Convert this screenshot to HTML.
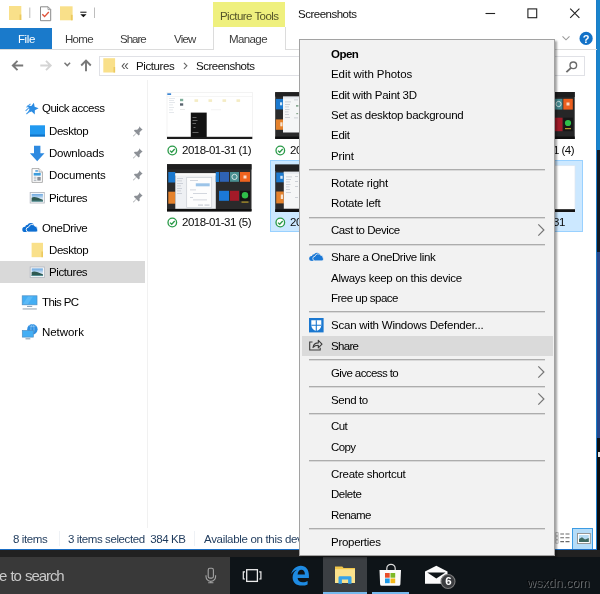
<!DOCTYPE html>
<html><head><meta charset="utf-8"><title>Screenshots</title>
<style>
*{box-sizing:border-box;margin:0;padding:0}
html,body{width:600px;height:594px;overflow:hidden;background:#fff}
body{position:relative;font-family:"Liberation Sans",sans-serif;font-size:11.5px;color:#1a1a1a}
.a{position:absolute}
div{will-change:transform}
svg{position:absolute;overflow:visible}
.t{position:absolute;white-space:nowrap;line-height:14px;height:14px;letter-spacing:-.4px}
.sep{position:absolute;left:309px;width:236px;height:1px;background:#adadad;box-shadow:0 1px 0 rgba(160,160,160,.3)}
.mi{position:absolute;left:331px;white-space:nowrap;line-height:14px;height:14px;color:#000;letter-spacing:-.28px}
.nav{position:absolute;white-space:nowrap;line-height:14px;height:14px;color:#000;letter-spacing:-.42px}
.lbl{position:absolute;white-space:nowrap;line-height:14px;height:14px;color:#0a0a0a;letter-spacing:-.5px}
</style></head><body>
<!-- window background -->
<div class="a" id="win" style="left:0;top:0;width:596px;height:549px;background:#fff"></div>
<!-- right desktop strip -->
<div class="a" style="left:596px;top:0;width:4px;height:150px;background:#1a84cc"></div>
<div class="a" style="left:596px;top:150px;width:4px;height:102px;background:#121a24"></div>
<div class="a" style="left:596px;top:252px;width:4px;height:186px;background:#27478a"></div>
<div class="a" style="left:596px;top:438px;width:4px;height:112px;background:#0c0d10"></div>
<div class="a" style="left:598px;top:452px;width:2px;height:5px;background:#e8e8e8"></div>
<div class="a" style="left:596px;top:0;width:1px;height:550px;background:#1c7cc8"></div>

<!-- ===== title bar ===== -->
<svg style="left:0;top:0" width="100" height="28" viewBox="0 0 100 28">
  <rect x="9" y="6" width="12.3" height="14" fill="#f9e08a"/><rect x="19.6" y="14.5" width="1.7" height="5.5" fill="#ecc95e"/>
  <rect x="29.3" y="7.5" width="1" height="10.5" fill="#bdbdbd"/>
  <path d="M40.5 6.8h7.6l2.6 2.6v11.3h-10.2z" fill="#fff" stroke="#8a8a8a" stroke-width="1"/>
  <path d="M48 6.8v2.8h2.7" fill="none" stroke="#8a8a8a" stroke-width=".8"/>
  <path d="M42.3 14.2l2.3 2.4l4.2-4.6" fill="none" stroke="#e0533a" stroke-width="1.4"/>
  <rect x="60" y="6.3" width="12.6" height="14" fill="#f9e08a"/><rect x="70.9" y="14.8" width="1.7" height="5.5" fill="#ecc95e"/>
  <rect x="80.3" y="11.7" width="6.2" height="1" fill="#111"/>
  <path d="M80.3 14.2h6.2l-3.1 3.1z" fill="#111"/>
  <rect x="94" y="7.5" width="1" height="10.5" fill="#bdbdbd"/>
</svg>
<div class="a" style="left:213px;top:2px;width:72px;height:25px;background:#eff07e"></div>
<div class="t" style="left:220px;top:9px;color:#55552a;letter-spacing:-.55px">Picture Tools</div>
<div class="t" style="left:298px;top:7px;color:#111;letter-spacing:-.5px">Screenshots</div>
<svg style="left:480px;top:0" width="117" height="28" viewBox="480 0 117 28">
  <path d="M485.5 13.5h9.6" stroke="#222" stroke-width="1.1"/>
  <rect x="527.9" y="8.9" width="8.8" height="8.8" fill="none" stroke="#222" stroke-width="1.1"/>
  <path d="M570.2 8.6l9.2 9.2M579.4 8.6l-9.2 9.2" stroke="#222" stroke-width="1.1"/>
</svg>

<!-- ===== ribbon tabs ===== -->
<div class="a" style="left:0;top:28px;width:52px;height:22px;background:#1a7acb"></div>
<div class="t" style="left:17.500px;top:32px;color:#fff">File</div>
<div class="t" style="left:65px;top:32px;color:#3c3c3c;letter-spacing:-.7px">Home</div>
<div class="t" style="left:120px;top:32px;color:#3c3c3c;letter-spacing:-1px">Share</div>
<div class="t" style="left:174px;top:32px;color:#3c3c3c;letter-spacing:-.8px">View</div>
<div class="a" style="left:0;top:49px;width:597px;height:1px;background:#dcdcdc"></div>
<div class="a" style="left:213px;top:27px;width:73px;height:23px;border:1px solid #dcdcdc;border-top:none;border-bottom:none;background:#fff"></div>
<div class="t" style="left:229px;top:32px;color:#3c3c3c;letter-spacing:-.6px">Manage</div>
<svg style="left:556px;top:28px" width="40" height="22" viewBox="556 28 40 22">
  <path d="M562.5 36.3l3.5 3.5l3.5-3.5" fill="none" stroke="#9a9a9a" stroke-width="1.1"/>
  <circle cx="586.100" cy="38.400" r="6.600" fill="#1272c8"/>
</svg>
<div class="a" style="left:582px;top:31.500px;width:8px;height:14px;line-height:14px;text-align:center;color:#fff;font-weight:bold;font-size:11px">?</div>

<!-- ===== address bar ===== -->
<svg style="left:0;top:52px" width="100" height="28" viewBox="0 52 100 28">
  <path d="M23.200 65.500h-10M17.500 60.800l-4.700 4.700l4.700 4.700" fill="none" stroke="#787878" stroke-width="1.900"/>
  <path d="M40.300 65.500h10M46 60.800l4.700 4.700l-4.700 4.700" fill="none" stroke="#d4d4d4" stroke-width="1.900"/>
  <path d="M64.500 62.800l2.800 2.800l2.800-2.800" fill="none" stroke="#787878" stroke-width="1.500"/>
  <path d="M86 71.200v-10.400M81.200 65.500l4.800-4.800l4.800 4.800" fill="none" stroke="#787878" stroke-width="1.900"/>
</svg>
<div class="a" style="left:99px;top:56px;width:420px;height:20px;border:1px solid #e0e1e6;background:#fff"></div>
<svg style="left:100px;top:56px" width="20" height="20" viewBox="100 56 20 20">
  <rect x="103.3" y="58.2" width="11.8" height="14.3" fill="#f9e08a"/><rect x="113.5" y="67" width="1.6" height="5.5" fill="#ecc95e"/>
</svg>
<div class="t" style="left:120.500px;top:58px;color:#555;font-size:14px;letter-spacing:-1.500px">«</div>
<div class="t" style="left:136px;top:59px;color:#111">Pictures</div>
<svg style="left:180px;top:58px" width="10" height="16" viewBox="180 58 10 16"><path d="M183.9 62.8l3 3l-3 3" fill="none" stroke="#666" stroke-width="1.1"/></svg>
<div class="t" style="left:196px;top:59px;color:#111;letter-spacing:-.5px">Screenshots</div>
<div class="a" style="left:530px;top:56px;width:55px;height:20px;border:1px solid #e0e1e6;background:#fff"></div>
<svg style="left:560px;top:58px" width="22" height="18" viewBox="560 58 22 18">
  <circle cx="573.3" cy="65.3" r="3.3" fill="none" stroke="#6b6b6b" stroke-width="1.4"/>
  <path d="M571 67.8l-4.6 4.4" stroke="#6b6b6b" stroke-width="1.8"/>
</svg>

<!-- ===== nav pane ===== -->
<div class="a" style="left:147px;top:80px;width:1px;height:448px;background:#f1f1f1"></div>
<div class="a" style="left:0;top:261px;width:145px;height:22px;background:#d9d9d9"></div>
<div class="nav" style="left:42px;top:101px;letter-spacing:-0.5px">Quick access</div>
<div class="nav" style="left:49px;top:124px">Desktop</div>
<div class="nav" style="left:49px;top:146px;letter-spacing:-0.22px">Downloads</div>
<div class="nav" style="left:49px;top:168px;letter-spacing:-0.17px">Documents</div>
<div class="nav" style="left:49px;top:190.500px">Pictures</div>
<div class="nav" style="left:42px;top:220.500px">OneDrive</div>
<div class="nav" style="left:49px;top:242.500px">Desktop</div>
<div class="nav" style="left:49px;top:265px">Pictures</div>
<div class="nav" style="left:42px;top:294.700px;letter-spacing:-0.62px">This PC</div>
<div class="nav" style="left:42px;top:324.500px;letter-spacing:-0.05px">Network</div>
<svg style="left:0;top:95px" width="150" height="250" viewBox="0 95 150 250">
  <!-- quick access star -->
  <path d="M33.90 102.68L34.62 106.84L38.58 108.27L34.86 110.24L34.72 114.45L31.70 111.51L27.65 112.69L29.51 108.90L27.14 105.41L31.31 106.01z" fill="#2a8be2"/>
  <path d="M30.500 103.800l-4 3.600M28.800 107.800l-3.200 3M29.800 111l-3.400 3" stroke="#4a9fea" stroke-width="1.100"/>
  <!-- desktop -->
  <rect x="30" y="125.300" width="15" height="11.200" fill="#2199f0"/><rect x="30" y="134.500" width="15" height="2" fill="#1274c8"/>
  <!-- downloads arrow -->
  <path d="M34 145.800h6.400v7.400h4.100l-7.300 8l-7.300-8h4.100z" fill="#2e8ae0"/>
  <!-- documents -->
  <path d="M32 168.600h7l3.400 3.400v10.400h-10.400z" fill="#fff" stroke="#9c9c9c" stroke-width=".8"/>
  <path d="M39 168.600v3.400h3.400" fill="#f0f0f0" stroke="#9c9c9c" stroke-width=".7"/>
  <rect x="35.300" y="170.200" width="2.600" height="1.500" fill="#4a9ad8"/><rect x="33.700" y="172.900" width="7" height="2.700" fill="#3d9ddc"/>
  <path d="M33.700 177.200h2.800M33.700 178.900h2.800M33.700 180.600h2.800" stroke="#9aa4ae" stroke-width=".8"/><rect x="37.300" y="176.900" width="3.400" height="3.700" fill="#8a9098"/>
  <!-- pictures -->
  <defs><linearGradient id="sky" x1="0" y1="0" x2="0" y2="1"><stop offset="0" stop-color="#6aa6de"/><stop offset=".7" stop-color="#e3eef8"/></linearGradient></defs>
  <rect x="30.200" y="192.5" width="14.100" height="10.500" fill="#fff" stroke="#b4b9c1" stroke-width=".9"/>
  <rect x="31.600" y="193.9" width="11.300" height="7.700" fill="url(#sky)"/><path d="M31.600 197.8c3-1.800 6 .3 11.300 1.900v1.900h-11.300z" fill="#2f5a52"/><rect x="31.600" y="200.7" width="11.300" height=".9" fill="#5a98a0"/>
  <!-- pins -->
  <g fill="#8c9096"><path d="M139 126.2l3.6 3.6l-1 .4l-2 2l.1 2.4l-1 .9l-2.3-2.3l-2.9 3.2l-.5-.5l3.2-2.9l-2.3-2.3l.9-1l2.4.1l2-2z"/></g>
  <g fill="#8c9096" transform="translate(0 22)"><path d="M139 126.2l3.6 3.6l-1 .4l-2 2l.1 2.4l-1 .9l-2.3-2.3l-2.9 3.2l-.5-.5l3.2-2.9l-2.3-2.3l.9-1l2.4.1l2-2z"/></g><g fill="#8c9096" transform="translate(0 44)"><path d="M139 126.2l3.6 3.6l-1 .4l-2 2l.1 2.4l-1 .9l-2.3-2.3l-2.9 3.2l-.5-.5l3.2-2.9l-2.3-2.3l.9-1l2.4.1l2-2z"/></g><g fill="#8c9096" transform="translate(0 66)"><path d="M139 126.2l3.6 3.6l-1 .4l-2 2l.1 2.4l-1 .9l-2.3-2.3l-2.9 3.2l-.5-.5l3.2-2.9l-2.3-2.3l.9-1l2.4.1l2-2z"/></g>
  <!-- onedrive -->
  <g fill="#0f6fd2"><circle cx="25" cy="229.400" r="2.700"/><circle cx="27.700" cy="227.300" r="2.500"/><circle cx="30.800" cy="226.300" r="3.200"/><rect x="25" y="228" width="8" height="4.100"/></g>
  <path d="M28.800 232.100a2.500 2.500 0 0 1-.2-5a3.500 3.500 0 0 1 6.300-1.100a2.700 2.700 0 0 1 2.500 2.900a2.100 2.100 0 0 1-1 3.200z" fill="#0f6fd2" stroke="#fff" stroke-width=".9"/>
  <rect x="22" y="232.100" width="16" height="1.500" fill="#fff"/>
  <!-- folder -->
  <rect x="31.6" y="242.8" width="11.4" height="14.4" fill="#f9e08a"/><rect x="41.400" y="251.500" width="1.600" height="5.700" fill="#ecc95e"/>
  <!-- pictures selected -->
  <rect x="30.200" y="267.0" width="14.100" height="10.500" fill="#fff" stroke="#b4b9c1" stroke-width=".9"/>
  <rect x="31.600" y="268.4" width="11.300" height="7.700" fill="url(#sky)"/><path d="M31.600 272.3c3-1.800 6 .3 11.300 1.900v1.900h-11.300z" fill="#2f5a52"/><rect x="31.600" y="275.2" width="11.300" height=".9" fill="#5a98a0"/>
  <!-- this pc -->
  <rect x="22.200" y="295.800" width="14.800" height="9" fill="#43aef4" stroke="#4f8fc4" stroke-width=".7"/>
  <path d="M23 304l5-7.500h5l-5 7.500z" fill="#6cc2f8" opacity=".6"/>
  <rect x="27" y="305.900" width="5.200" height="1" fill="#7f9db4"/><rect x="22.600" y="308.300" width="14.200" height="1.300" fill="#a9b6c0"/>
  <!-- network -->
  <circle cx="32.400" cy="329.300" r="5.200" fill="#2f8fe2"/><path d="M29 325.500c2 1.500 5 1.500 7 0M32.400 324.100c-2 2.500-2 7 0 10M32.400 324.100c2.200 2.500 2.200 7 0 10" fill="none" stroke="#8cc6f4" stroke-width=".8"/>
  <rect x="22.300" y="330.500" width="11" height="6.600" fill="#43aef4" stroke="#4f8fc4" stroke-width=".7"/>
  <rect x="25.500" y="338.200" width="4.800" height="1.200" fill="#8ea4b4"/>
</svg>

<!-- ===== content ===== -->
<div class="a" style="left:270px;top:160px;width:313px;height:72px;background:#cce8ff;border:1px solid #99d1ff"></div>
<!-- thumbnails -->
<svg style="left:160px;top:88px" width="436" height="130" viewBox="160 88 436 130">
  <!-- thumb 1 -->
  <rect x="167" y="92.300" width="85.300" height="46.700" fill="#fff" stroke="#ececec" stroke-width=".6"/>
  <rect x="167.300" y="93.300" width="3.800" height="1.700" fill="#3c86d4"/>
  <rect x="167.300" y="96" width="84.700" height=".6" fill="#efefef"/>
  <g fill="#dfe3e8"><rect x="169" y="98" width="6" height=".8"/><rect x="169" y="100" width="5" height=".8"/><rect x="169" y="102" width="6" height=".8"/><rect x="169" y="104.500" width="4" height=".8"/><rect x="169" y="107" width="5" height=".8"/><rect x="169" y="109.500" width="4" height=".8"/><rect x="169" y="112" width="5" height=".8"/></g>
  <rect x="180" y="98.800" width="3.200" height="2.400" fill="#7fae9a"/><rect x="180" y="103.300" width="3.200" height="2.400" fill="#5a6470"/>
  <rect x="180" y="109" width="5" height=".8" fill="#e3e3e3"/>
  <g fill="#f4ecc4"><rect x="194.500" y="99.300" width="3.600" height="2.600"/><rect x="208.500" y="99.300" width="3.600" height="2.600"/><rect x="222.500" y="99.300" width="3.600" height="2.600"/><rect x="236.500" y="99.300" width="3.600" height="2.600"/></g>
  <rect x="211" y="109.500" width="10" height=".7" fill="#ededed"/>
  <rect x="190.800" y="112.600" width="15.900" height="24.600" fill="#121212"/>
  <g fill="#8a8a8a"><rect x="192.500" y="117" width="4" height=".7"/><rect x="192.500" y="120" width="5" height=".7"/><rect x="192.500" y="123" width="3.500" height=".7"/><rect x="193.500" y="127" width="2" height=".7"/><rect x="192.500" y="132" width="6" height=".7"/></g>
  <rect x="167" y="136.800" width="85.300" height="2.200" fill="#1c1c1c"/>
  <!-- thumb 2 -->
  <rect x="275.200" y="92.200" width="85" height="46.700" fill="#2b2b2c"/>
  <rect x="275.200" y="92.200" width="85" height="4.400" fill="#212122"/>
  <rect x="275.800" y="98.900" width="7.200" height="10.500" fill="#1b79cf"/><rect x="280" y="102.300" width="2.200" height="3" fill="#d5e6f6"/>
  <rect x="275.800" y="119.400" width="7.200" height="10.400" fill="#e5822c"/><rect x="280.300" y="122.300" width="2.200" height="4" fill="#f7e3d0"/>
  <rect x="283" y="96.600" width="40" height="35.900" fill="#f5f6f7"/>
  <rect x="283" y="96.600" width="40" height="2" fill="#e6e9ee"/>
  <g fill="#c3c8cf"><rect x="285" y="101.500" width="6" height=".8"/><rect x="285" y="104" width="5" height=".8"/><rect x="285" y="106.500" width="4" height=".8"/><rect x="285" y="109" width="4.500" height=".8"/><rect x="285" y="111.500" width="3.500" height=".8"/><rect x="285" y="114" width="4" height=".8"/><rect x="285" y="117" width="5" height=".8"/><rect x="294" y="99.500" width="4" height=".8"/><rect x="294" y="117.500" width="4" height=".8"/></g>
  <rect x="296" y="105.300" width="2.400" height="1.200" fill="#5a8a6a"/><rect x="296.300" y="113" width="1.800" height="1.200" fill="#8aa890"/>
  <rect x="275.200" y="136.600" width="85" height="2.300" fill="#0f0f10"/>
  <!-- thumb 4 -->
  <rect x="490" y="92" width="84.700" height="47" fill="#262627"/>
  <rect x="490" y="92" width="84.700" height="5" fill="#1d1d1e"/>
  <rect x="555" y="98.800" width="7.500" height="10.800" fill="#45898f"/><circle cx="558.600" cy="104" r="2.600" fill="none" stroke="#d8e6e6" stroke-width=".9"/>
  <rect x="563.300" y="98.800" width="9.500" height="10.800" fill="#ec5f1f"/><rect x="566.500" y="102.500" width="3" height="3" fill="#f6d9c8"/>
  <rect x="555" y="117.700" width="7.500" height="13.500" fill="#a31a28"/>
  <rect x="563.300" y="117.700" width="9.500" height="13.500" fill="#161616"/><circle cx="568" cy="123" r="3.100" fill="#2fbf4a"/>
  <rect x="565" y="128" width="6" height="1.200" fill="#b59a2a"/>
  <rect x="490" y="136.500" width="84.700" height="2.500" fill="#101010"/>
  <!-- thumb 5 -->
  <rect x="167" y="164.200" width="84.500" height="47.200" fill="#2a2a2b"/>
  <rect x="167" y="164.200" width="84.500" height="5.300" fill="#1e1e1f"/>
  <rect x="168.300" y="172" width="7" height="10.500" fill="#1b79cf"/>
  <rect x="168.300" y="191.700" width="7" height="12" fill="#e5822c"/>
  <rect x="175.300" y="173.300" width="40.500" height="35.500" fill="#eef0f3"/>
  <rect x="175.300" y="173.300" width="40.500" height="2.200" fill="#fafafa"/>
  <g fill="#c5cad2"><rect x="177" y="178" width="6" height=".8"/><rect x="177" y="180.500" width="5" height=".8"/><rect x="177" y="183" width="6" height=".8"/><rect x="177" y="185.500" width="4" height=".8"/><rect x="177" y="188" width="5" height=".8"/><rect x="177" y="190.500" width="4" height=".8"/><rect x="177" y="193" width="5" height=".8"/></g>
  <rect x="186.700" y="177.500" width="25" height="30" fill="#fdfdfd" stroke="#c9cdd3" stroke-width=".7"/>
  <rect x="195.800" y="183.300" width="13.900" height="3" fill="#9cc4e8"/>
  <g fill="#c9ced6"><rect x="190" y="180" width="8" height=".8"/><rect x="190" y="189.500" width="6" height=".8"/><rect x="193" y="193" width="14" height=".8"/><rect x="190" y="197" width="3" height=".8"/><rect x="193" y="199.500" width="14" height=".8"/><rect x="198" y="204.500" width="5" height="1.200"/><rect x="204.500" y="204.500" width="5" height="1.200"/></g>
  <rect x="215.800" y="172" width="3.400" height="10" fill="#1b79cf"/>
  <rect x="220" y="172" width="9" height="9.800" fill="#2f63b5"/>
  <rect x="230" y="172" width="9" height="9.800" fill="#4a8f92"/><circle cx="234.500" cy="176.900" r="2.600" fill="none" stroke="#e3eeee" stroke-width=".9"/>
  <rect x="240" y="172" width="10" height="9.800" fill="#ee631f"/><rect x="243.500" y="175.500" width="3" height="3" fill="#f8dccb"/>
  <rect x="219" y="190.800" width="10" height="10" fill="#1b79d6"/>
  <rect x="230" y="190.800" width="9" height="10" fill="#a31a28"/>
  <rect x="240" y="190.800" width="10" height="10" fill="#141414"/><circle cx="245" cy="195.300" r="3.200" fill="#2fbf4a"/>
  <rect x="241.500" y="201.500" width="7" height="1.200" fill="#b59a2a"/>
  <rect x="167" y="209" width="84.500" height="2.400" fill="#0f0f0f"/>
  <!-- thumb 6 -->
  <rect x="275.200" y="164.600" width="85" height="47.400" fill="#2b2b2c"/>
  <rect x="275.200" y="164.600" width="85" height="6.400" fill="#212122"/>
  <rect x="276.200" y="172.500" width="7.600" height="9.800" fill="#1b79cf"/><rect x="280.300" y="175.800" width="2.400" height="3" fill="#d5e6f6"/>
  <rect x="276.200" y="191.500" width="7.600" height="11.900" fill="#e5822c"/><rect x="280.800" y="194.500" width="2.200" height="4.500" fill="#f7e3d0"/>
  <rect x="283.800" y="171.800" width="40" height="36.900" fill="#f5f6f7"/>
  <rect x="283.800" y="171.800" width="40" height="2" fill="#e6e9ee"/>
  <g fill="#c3c8cf"><rect x="286" y="176.500" width="6" height=".8"/><rect x="286" y="179" width="5" height=".8"/><rect x="286" y="181.500" width="4" height=".8"/><rect x="286" y="184" width="4.500" height=".8"/><rect x="286" y="186.500" width="3.500" height=".8"/><rect x="286" y="189" width="4" height=".8"/><rect x="286" y="192" width="5" height=".8"/><rect x="295" y="176" width="3" height=".8"/><rect x="295" y="181" width="3" height=".8"/><rect x="295" y="186" width="3" height=".8"/><rect x="295" y="197" width="3" height=".8"/></g>
  <rect x="275.200" y="209.300" width="85" height="2.700" fill="#0f0f10"/>
  <!-- thumb 8 -->
  <rect x="500" y="165.700" width="75" height="46.300" fill="#fff" stroke="#dfe6ee" stroke-width=".7"/>
  <rect x="500" y="209.200" width="75" height="2.800" fill="#141414"/>
</svg>
<svg style="left:160px;top:140px" width="140" height="100" viewBox="160 140 140 100">
  <g><circle cx="172.300" cy="150.500" r="4.300" fill="#fff" stroke="#2a9a48" stroke-width="1.300"/><path d="M170 150.600l1.700 1.700l3-3.300" fill="none" stroke="#2a9a48" stroke-width="1.300"/></g>
  <g transform="translate(0 72)"><circle cx="172.300" cy="150.500" r="4.300" fill="#fff" stroke="#2a9a48" stroke-width="1.300"/><path d="M170 150.600l1.700 1.700l3-3.300" fill="none" stroke="#2a9a48" stroke-width="1.300"/></g><g transform="translate(108 0)"><circle cx="172.300" cy="150.500" r="4.300" fill="#fff" stroke="#2a9a48" stroke-width="1.300"/><path d="M170 150.600l1.700 1.700l3-3.300" fill="none" stroke="#2a9a48" stroke-width="1.300"/></g><g transform="translate(108 72)"><circle cx="172.300" cy="150.500" r="4.300" fill="#fff" stroke="#2a9a48" stroke-width="1.300"/><path d="M170 150.600l1.700 1.700l3-3.300" fill="none" stroke="#2a9a48" stroke-width="1.300"/></g>
</svg>
<div class="lbl" style="left:182px;top:143px">2018-01-31 (1)</div>
<div class="lbl" style="left:182px;top:215px">2018-01-31 (5)</div>
<div class="lbl" style="left:290px;top:143px">2018-01-31 (2)</div>
<div class="lbl" style="left:290px;top:215px">2018-01-31 (6)</div>
<div class="lbl" style="left:504.500px;top:143px">2018-01-31 (4)</div>
<div class="lbl" style="left:511px;top:215px">2018-01-31</div>

<!-- ===== status bar ===== -->
<div class="t" style="left:13px;top:532px;color:#1e3a5c">8 items</div>
<div class="a" style="left:59px;top:531px;width:1px;height:15px;background:#eef1f5"></div>
<div class="t" style="left:68px;top:532px;color:#1e3a5c">3 items selected&nbsp; 384 KB</div>
<div class="a" style="left:194px;top:531px;width:1px;height:15px;background:#eef1f5"></div>
<div class="t" style="left:203.500px;top:532px;color:#1e3a5c;letter-spacing:-.32px">Available on this device</div>
<div class="a" style="left:572px;top:528px;width:21px;height:22px;background:#b5dcf8;border:1px solid #3b9be3"></div>
<svg style="left:550px;top:528px" width="46" height="22" viewBox="550 528 46 22">
  <path d="M560.300 534h3.700M565.500 534h4M560.300 537.800h3.700M565.500 537.800h4M560.300 541.600h3.700M565.500 541.600h4" stroke="#6a6a6a" stroke-width="1.100"/><path d="M555.800 532.500h2.400v3.200h-2.400zM555.800 536.300h2.400v3.200h-2.400zM555.800 540.100h2.400v3.200h-2.400z" fill="none" stroke="#9a9a9a" stroke-width=".6"/>
  <rect x="577.500" y="533.500" width="12.800" height="10" fill="#fff" stroke="#8e8e8e" stroke-width=".9"/>
  <rect x="579" y="535" width="9.800" height="7" fill="#b7dcf4"/><path d="M579 542v-3l3-1.800l3 2.300l3.800-1.500v4z" fill="#3f6a62"/>
</svg>

<!-- ===== taskbar ===== -->
<div class="a" style="left:0;top:549px;width:597px;height:1px;background:#1a6dc4"></div>
<div class="a" style="left:0;top:550px;width:600px;height:44px;background:#0e1418"></div>
<div class="a" style="left:0;top:550px;width:600px;height:7px;background:#212121"></div>
<div class="a" style="left:0;top:557px;width:230px;height:37px;background:#393939"></div>
<div class="a" style="left:-1px;top:567px;color:#c9c9c9;font-size:15px;letter-spacing:-1.05px;word-spacing:1px;line-height:18px;white-space:nowrap">e to search</div>
<div class="a" style="left:323px;top:557px;width:44px;height:37px;background:#3b3f43"></div>
<div class="a" style="left:323px;top:592px;width:44px;height:2px;background:#76b9ed"></div>
<div class="a" style="left:372px;top:592px;width:37px;height:2px;background:#76b9ed"></div>
<svg style="left:200px;top:556px" width="260" height="38" viewBox="200 556 260 38">
  <!-- mic -->
  <rect x="208.200" y="568.300" width="5.200" height="9.800" rx="1.600" fill="none" stroke="#a4a4a4" stroke-width="1.100"/>
  <path d="M206 575.200v1.300a4.800 4.800 0 0 0 9.600 0v-1.300M210.800 581.200v1.300M208.200 582.700h5.200" fill="none" stroke="#a4a4a4" stroke-width="1.100"/>
  <!-- task view -->
  <rect x="246.700" y="569.700" width="10.700" height="11.700" fill="none" stroke="#ececec" stroke-width="1.300"/>
  <path d="M245 571.800h-1.700v7.200h1.700M259.200 571.800h1.700v7.200h-1.700" fill="none" stroke="#ececec" stroke-width="1.200"/>
  <!-- edge -->
  <path fill-rule="evenodd" d="M291 574.600C292.200 569.500 296 565.700 300.800 565.700C306 565.700 308.900 569.800 308.900 575L308.900 577.900L297.600 577.900C297.900 580.800 299.900 582.300 302.800 582.300C304.600 582.300 306.200 581.800 307.600 581L307.600 584.400C306 585.200 304 585.600 301.800 585.600C296.200 585.600 292.600 582.300 292.600 577.400C292.600 574 294.300 571.300 297 569.800C294.400 570.300 292.300 572.200 291 574.600ZM297.600 574.600C297.800 571.600 299.300 569.800 301.400 569.800C303.600 569.800 304.900 571.600 304.900 574.600Z" fill="#1e8be2"/>
  <!-- explorer -->
  <path d="M335 566.600h7.300l1.300 1.500h11.400v3h-20z" fill="#f0c64a"/>
  <rect x="335" y="569.200" width="20" height="13.800" fill="#fbe28d"/>
  <path d="M338.500 583.800v-6.200a1.400 1.400 0 0 1 1.400-1.400h10.200a1.400 1.400 0 0 1 1.400 1.400v6.200h-3.400v-4.300h-6.200v4.300z" fill="#35a3ea"/>
  <!-- store -->
  <path d="M386.800 570.500v-2a4.200 4.200 0 0 1 8.400 0v2" fill="none" stroke="#dcdcdc" stroke-width="1.200"/>
  <path d="M379.500 570h21.500l-.6 14.200a1.600 1.600 0 0 1-1.600 1.600h-17.100a1.600 1.600 0 0 1-1.600-1.600z" fill="#fbfbfb"/>
  <rect x="385" y="573" width="4.700" height="4.700" fill="#e84e2a"/><rect x="390.500" y="573" width="4.700" height="4.700" fill="#7db928"/>
  <rect x="385" y="578.500" width="4.700" height="4.700" fill="#1e9be8"/><rect x="390.500" y="578.500" width="4.700" height="4.700" fill="#f5b91a"/>
  <!-- mail -->
  <path d="M425 571.600l11.300-5.900l11.200 5.900v12.200h-22.500z" fill="#fbfbfb"/>
  <path d="M427.300 572.500h18.200l-9.200 6z" fill="#0e1418"/>
  <circle cx="448" cy="581.500" r="7" fill="#3b3d40" stroke="#7c7c7c" stroke-width="1.100"/>
</svg>
<div class="a" style="left:443.500px;top:574px;width:9px;height:15px;line-height:15px;text-align:center;color:#fff;font-size:11.500px;font-weight:bold">6</div>

<!-- ===== context menu ===== -->
<div class="a" style="left:299px;top:39px;width:256px;height:517px;background:#f2f2f2;border:1px solid #a2a2a2;box-shadow:2px 2px 2px rgba(0,0,0,.36)"></div>
<div class="a" style="left:302px;top:336px;width:251px;height:20px;background:#dadada"></div>
<div class="mi" style="top:47px;font-weight:bold;letter-spacing:-.5px">Open</div>
<div class="mi" style="top:67px;letter-spacing:-0.08px">Edit with Photos</div>
<div class="mi" style="top:88px">Edit with Paint 3D</div>
<div class="mi" style="top:108px">Set as desktop background</div>
<div class="mi" style="top:128px">Edit</div>
<div class="mi" style="top:149px;letter-spacing:-0.15px">Print</div>
<div class="sep" style="top:169px"></div>
<div class="mi" style="top:176px;letter-spacing:-0.2px">Rotate right</div>
<div class="mi" style="top:196px">Rotate left</div>
<div class="sep" style="top:217px"></div>
<div class="mi" style="top:223px;letter-spacing:-0.43px">Cast to Device</div>
<div class="sep" style="top:244px"></div>
<div class="mi" style="top:250px;letter-spacing:-0.39px">Share a OneDrive link</div>
<div class="mi" style="top:271px">Always keep on this device</div>
<div class="mi" style="top:291px;letter-spacing:-0.5px">Free up space</div>
<div class="sep" style="top:311px"></div>
<div class="mi" style="top:318px;letter-spacing:-0.23px">Scan with Windows Defender...</div>
<div class="mi" style="top:339px;letter-spacing:-0.68px">Share</div>
<div class="sep" style="top:359px"></div>
<div class="mi" style="top:366px;letter-spacing:-0.6px">Give access to</div>
<div class="sep" style="top:386px"></div>
<div class="mi" style="top:393px;letter-spacing:-0.4px">Send to</div>
<div class="sep" style="top:413px"></div>
<div class="mi" style="top:419px;letter-spacing:-0.6px">Cut</div>
<div class="mi" style="top:440px;letter-spacing:-0.6px">Copy</div>
<div class="sep" style="top:460px"></div>
<div class="mi" style="top:467px">Create shortcut</div>
<div class="mi" style="top:487px;letter-spacing:-0.48px">Delete</div>
<div class="mi" style="top:508px;letter-spacing:-0.6px">Rename</div>
<div class="sep" style="top:528px"></div>
<div class="mi" style="top:535px">Properties</div>
<svg style="left:300px;top:40px" width="255" height="515" viewBox="300 40 255 515">
  <g fill="none" stroke="#767676" stroke-width="1.200">
    <path d="M538.300 224.300l5.600 5.700l-5.600 5.700"/>
    <path d="M538.300 366.300l5.600 5.700l-5.600 5.700"/>
    <path d="M538.300 393.300l5.600 5.700l-5.600 5.700"/>
  </g>
  <!-- onedrive -->
  <g fill="#1a78d6"><circle cx="311.700" cy="258.400" r="2.500"/><circle cx="314.200" cy="256.500" r="2.300"/><circle cx="317" cy="255.600" r="2.900"/><rect x="311.700" y="257" width="7" height="3.900"/></g>
  <path d="M315.200 260.900a2.300 2.300 0 0 1-.2-4.600a3.200 3.200 0 0 1 5.800-1a2.500 2.500 0 0 1 2.300 2.700a1.900 1.900 0 0 1-.9 2.900z" fill="#1a78d6" stroke="#f2f2f2" stroke-width=".8"/>
  <rect x="309" y="260.900" width="15" height="1.300" fill="#f2f2f2"/>
  <!-- defender -->
  <rect x="309" y="318" width="14.600" height="14.400" fill="#1b78d0"/>
  <path d="M311.300 320.200h10v5c0 3-2.300 4.800-5 5.800c-2.700-1-5-2.800-5-5.800z" fill="#fff"/>
  <path d="M316.300 320.200v10.800M311.300 325.300h10" stroke="#1b78d0" stroke-width="1.100"/>
  <!-- share -->
  <path d="M312.500 342h-2.800v8h10.500v-2.300" fill="none" stroke="#3c3c3c" stroke-width="1.100"/>
  <path d="M313 347.500c.5-3 2.600-4.600 5.300-4.600v-2.600l3.700 3.800l-3.700 3.800v-2.600c-2.300 0-4 .6-5.300 2.200z" fill="none" stroke="#3c3c3c" stroke-width="1.100" stroke-linejoin="round"/>
</svg>

<div class="a" style="left:527px;top:576px;color:#07090b;font-size:12.5px;line-height:15px;white-space:nowrap;text-shadow:1px 1px 0 rgba(205,205,205,.48)">wsxdn.com</div>
</body></html>
